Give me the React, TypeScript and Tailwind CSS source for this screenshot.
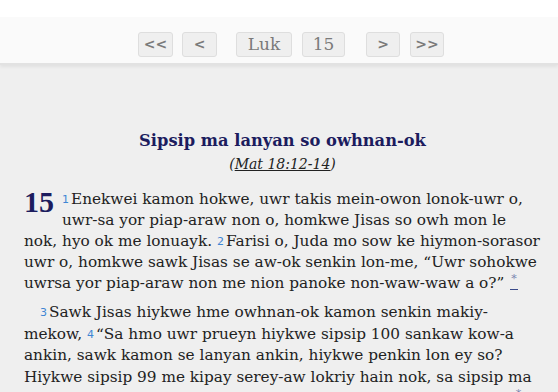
import React from "react";

const serif = { fontFamily: '"DejaVu Serif", "Liberation Serif", serif' };

function Btn({ children, w, sans }: { children: React.ReactNode; w: string; sans?: boolean }) {
  return (
    <div
      className={`${w} h-[25px] flex items-center justify-center rounded-[3px] border border-[#dedede] bg-[#efefef] text-[#7a7a7a] ${sans ? "text-[14px] font-bold" : "text-[17px]"}`}
      style={sans ? { fontFamily: '"DejaVu Sans", sans-serif' } : serif}
    >
      {children}
    </div>
  );
}

function V({ n }: { n: string }) {
  return (
    <sup className="text-[11px] text-[#3f86d4] mr-[2px] relative top-[-1px]" style={{ fontFamily: '"DejaVu Sans", sans-serif' }}>
      {n}
    </sup>
  );
}

function Fn() {
  return (
    <span className="inline-block border-b-[1.5px] border-[#3a4a8a] text-[#7a86b0] text-[11px] leading-[11px] align-[6px] px-[1px] ml-[6px] h-[17px]">
      *
    </span>
  );
}

export default function App() {
  return (
    <div className="w-[558px] h-[392px] overflow-hidden bg-[#efefef]" style={serif}>
      <div className="bg-white pt-[17px]">
        <div className="h-[48px] bg-[#fafafa] border-b-[2px] border-[#e2e2e2] flex pt-[15px] pl-[138px] shadow-[0_2px_3px_rgba(0,0,0,0.06)]">
          <Btn w="w-[35px]" sans>&lt;&lt;</Btn>
          <div className="w-[9px]" />
          <Btn w="w-[35px]" sans>&lt;</Btn>
          <div className="w-[19px]" />
          <Btn w="w-[56px]">Luk</Btn>
          <div className="w-[10px]" />
          <Btn w="w-[43px]">15</Btn>
          <div className="w-[21px]" />
          <Btn w="w-[34px]" sans>&gt;</Btn>
          <div className="w-[10px]" />
          <Btn w="w-[34px]" sans>&gt;&gt;</Btn>
        </div>
      </div>
      <div className="pl-[24px] pr-[10px] pt-[64px]">
        <div className="mr-[7px]">
          <div className="text-center text-[16.3px] font-bold text-[#1c1c5e] leading-[24px]">
            Sipsip ma lanyan so owhnan-ok
          </div>
          <div className="text-center text-[14px] italic text-[#222] leading-[20px] mt-[1px]">
            (<span className="underline">Mat 18:12-14</span>)
          </div>
        </div>
        <p className="mt-[15px] text-[15.3px] leading-[21px] text-[#222] whitespace-nowrap">
          <span
            className="float-left text-[30px] leading-[30px] font-bold text-[#1c1c5e] mr-[8px] mt-[-2px]"
            style={{ fontFamily: '"Liberation Serif", serif' }}
          >
            15
          </span>
          <V n="1" />Enekwei kamon hokwe, uwr takis mein-owon lonok-uwr o,
          <br />
          uwr-sa yor piap-araw non o, homkwe Jisas so owh mon le
          <br />
          nok, hyo ok me lonuayk. <V n="2" />Farisi o, Juda mo sow ke hiymon-sorasor
          <br />
          uwr o, homkwe sawk Jisas se aw-ok senkin lon-me, “Uwr sohokwe
          <br />
          uwrsa yor piap-araw non me nion panoke non-waw-waw a o?”
          <Fn />
        </p>
        <p className="mt-[8px] text-[15.3px] leading-[21.5px] text-[#222] indent-[16px] whitespace-nowrap">
          <V n="3" />Sawk Jisas hiykwe hme owhnan-ok kamon senkin makiy-
          <br />
          mekow, <V n="4" />“Sa hmo uwr prueyn hiykwe sipsip 100 sankaw kow-a
          <br />
          ankin, sawk kamon se lanyan ankin, hiykwe penkin lon ey so?
          <br />
          Hiykwe sipsip 99 me kipay serey-aw lokriy hain nok, sa sipsip ma
          <br />
          lanyan ok owkwe sawk hiykwe kow-a ankin hme kan so-ok?”
          <Fn />
        </p>
      </div>
    </div>
  );
}
